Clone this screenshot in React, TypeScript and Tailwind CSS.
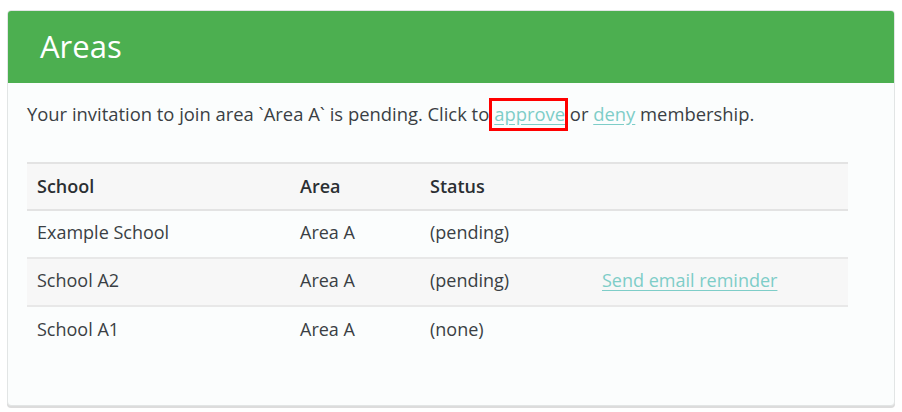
import React from "react";

type Row = {
  school: string;
  area: string;
  status: string;
  action?: string;
};

const rows: Row[] = [
  { school: "Example School", area: "Area A", status: "(pending)" },
  {
    school: "School A2",
    area: "Area A",
    status: "(pending)",
    action: "Send email reminder",
  },
  { school: "School A1", area: "Area A", status: "(none)" },
];

export default function App() {
  return (
    <div
      className="min-h-screen bg-white pt-[10px] pl-[7px] pr-[7px]"
      style={{ fontFamily: '"Open Sans", "Liberation Sans", sans-serif' }}
    >
      <section className="w-[888px] h-[396px] rounded-[4px] border border-[#e2e5e5] bg-[#fbfdfd] shadow-[0_2px_0_#dcdcdc] overflow-hidden">
        {/* Шапка */}
        <div className="h-[72px] bg-[#4caf50] flex items-center pl-[32px] pb-[1px]">
          <h1 className="text-[31px] text-white leading-none">Areas</h1>
        </div>

        <div className="px-[19px] pt-[18px]">
          <p className="text-[18.4px] text-[#3a3f44] leading-[26px]">
            Your invitation to join area `Area A` is pending. Click to
            <span className="relative inline-block ml-[5px]">
              <a
                href="#"
                className="text-[#7ecdc8] underline underline-offset-[3px]"
              >
                approve
              </a>
              <span className="absolute -left-[5px] -right-[3px] -top-[3px] -bottom-[4px] border-[3px] border-[#ff0000]" />
            </span>{" "}
            or{" "}
            <a
              href="#"
              className="text-[#7ecdc8] underline underline-offset-[3px]"
            >
              deny
            </a>{" "}
            membership.
          </p>

          <table className="mt-[35px] w-[821px] border-collapse text-[18px] text-[#3a3f44]">
            <thead>
              <tr className="bg-[#f7f7f7] border-t-2 border-b-2 border-[#e3e3e3]">
                <th className="h-[47px] w-[263px] px-[10px] pb-[1px] text-left font-semibold text-[#2b2f33]">
                  School
                </th>
                <th className="w-[130px] px-[10px] pb-[1px] text-left font-semibold text-[#2b2f33]">
                  Area
                </th>
                <th className="w-[172px] px-[10px] pb-[1px] text-left font-semibold text-[#2b2f33]">
                  Status
                </th>
                <th className="px-[10px]" />
              </tr>
            </thead>
            <tbody>
              {rows.map((r, i) => (
                <tr
                  key={r.school}
                  className={
                    (i % 2 === 1 ? "bg-[#f7f7f7] " : "") +
                    (i < rows.length - 1 ? "border-b-2 border-[#e8e8e8]" : "")
                  }
                >
                  <td className="h-[48px] px-[10px] pb-[3px]">{r.school}</td>
                  <td className="px-[10px] pb-[3px]">{r.area}</td>
                  <td className="px-[10px] pb-[3px]">{r.status}</td>
                  <td className="px-[10px] pb-[3px]">
                    {r.action && (
                      <a
                        href="#"
                        className="text-[#7ecdc8] underline underline-offset-[3px]"
                      >
                        {r.action}
                      </a>
                    )}
                  </td>
                </tr>
              ))}
            </tbody>
          </table>
        </div>
      </section>
    </div>
  );
}
